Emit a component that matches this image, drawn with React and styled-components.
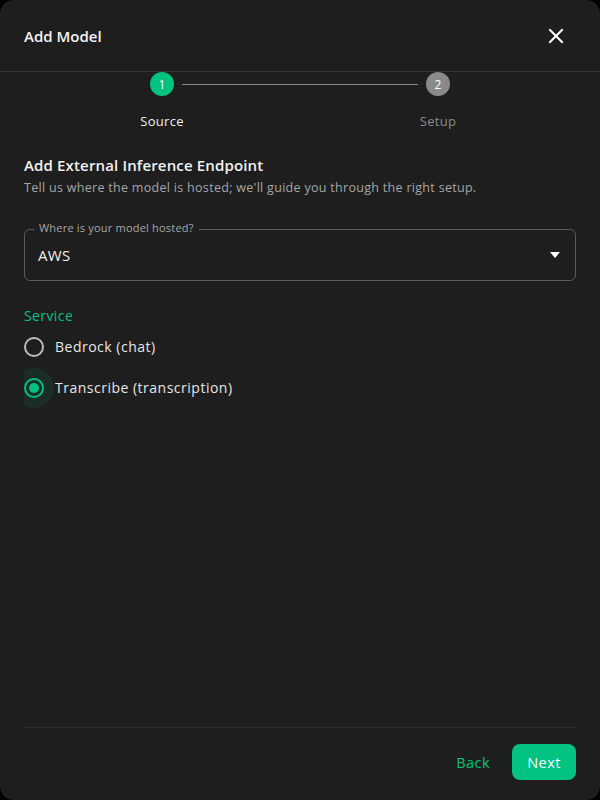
import React from "react";
import styled, { createGlobalStyle } from "styled-components";

const GREEN = "#00c281";

const Global = createGlobalStyle`
  html, body { margin: 0; padding: 0; background: #000; }
  body { font-family: "Open Sans", "Noto Sans", sans-serif; }
  * { box-sizing: border-box; }
`;

const Dialog = styled.div`
  width: 600px;
  height: 800px;
  background: #1e1e1e;
  border-radius: 14px;
  display: flex;
  flex-direction: column;
  color: #ececec;
  overflow: hidden;
`;

const Header = styled.div`
  height: 72px;
  padding: 0 24px;
  display: flex;
  align-items: center;
  justify-content: space-between;
  border-bottom: 1px solid #333;
  flex-shrink: 0;
`;

const Title = styled.h2`
  margin: 0;
  font-size: 15px;
  font-weight: 600;
  color: #f2f2f2;
`;

const CloseBtn = styled.button`
  background: none;
  border: 0;
  padding: 0;
  width: 24px;
  height: 24px;
  display: flex;
  align-items: center;
  justify-content: center;
  color: #fff;
  cursor: pointer;
  margin-right: 8px;
`;

const Body = styled.div`
  flex: 1;
  padding: 0 24px;
  display: flex;
  flex-direction: column;
  overflow: hidden;
`;

const Stepper = styled.div`
  display: grid;
  grid-template-columns: 1fr 1fr;
`;

const Step = styled.div`
  position: relative;
  display: flex;
  flex-direction: column;
  align-items: center;
`;

const Circle = styled.div`
  width: 24px;
  height: 24px;
  border-radius: 50%;
  background: ${(p) => (p.$active ? GREEN : "#8a8a8a")};
  color: #fff;
  font-size: 12px;
  display: flex;
  align-items: center;
  justify-content: center;
  position: relative;
  z-index: 1;
`;

const Connector = styled.div`
  position: absolute;
  top: 12px;
  left: calc(-50% + 20px);
  right: calc(50% + 20px);
  border-top: 1px solid #8a8a8a;
`;

const StepLabel = styled.div`
  margin-top: 16px;
  font-size: 13px;
  line-height: 18px;
  letter-spacing: 0.3px;
  color: ${(p) => (p.$active ? "#f0f0f0" : "#8c8c8c")};
`;

const Section = styled.div`
  margin-top: 25px;
`;

const SectionTitle = styled.h3`
  margin: 0;
  font-size: 15px;
  font-weight: 600;
  line-height: 20px;
  letter-spacing: 0.15px;
  color: #f2f2f2;
`;

const SectionText = styled.p`
  margin: 4px 0 0;
  font-size: 12.5px;
  line-height: 18px;
  letter-spacing: 0.3px;
  color: #a6a6a6;
`;

const SelectBox = styled.div`
  position: relative;
  margin-top: 32px;
  height: 52px;
  border: 1px solid #5a5a5a;
  border-radius: 6px;
  display: flex;
  align-items: center;
  justify-content: space-between;
  padding: 0 14px 0 13px;
`;

const SelectLabel = styled.span`
  position: absolute;
  top: -9px;
  left: 9px;
  padding: 0 5px;
  background: #1e1e1e;
  font-size: 11px;
  line-height: 14px;
  letter-spacing: 0.2px;
  color: #a6a6a6;
`;

const SelectValue = styled.span`
  font-size: 15px;
  letter-spacing: 0.3px;
  color: #f0f0f0;
`;

const ServiceLabel = styled.div`
  margin-top: 25px;
  font-size: 14px;
  line-height: 20px;
  letter-spacing: 0.4px;
  color: ${GREEN};
`;

const RadioGroup = styled.div`
  display: flex;
  flex-direction: column;
  margin-top: 0;
  overflow: hidden;
`;

const RadioRow = styled.label`
  display: flex;
  align-items: center;
  gap: 11px;
  height: 41px;
  font-size: 14px;
  letter-spacing: 0.5px;
  color: #e6e6e6;
  cursor: pointer;
`;

const RadioWrap = styled.span`
  position: relative;
  width: 20px;
  height: 20px;
  flex-shrink: 0;
`;

const Halo = styled.span`
  position: absolute;
  left: -10px;
  top: -10px;
  width: 40px;
  height: 40px;
  border-radius: 50%;
  background: rgba(0, 194, 129, 0.1);
`;

const RadioCircle = styled.span`
  position: absolute;
  inset: 0;
  border-radius: 50%;
  border: 2px solid ${(p) => (p.$checked ? GREEN : "#bdbdbd")};
  display: flex;
  align-items: center;
  justify-content: center;
  &::after {
    content: "";
    display: ${(p) => (p.$checked ? "block" : "none")};
    width: 10px;
    height: 10px;
    border-radius: 50%;
    background: ${GREEN};
  }
`;

const Footer = styled.div`
  margin: 0 24px;
  border-top: 1px solid #2c2c2c;
  padding: 16px 0 20px;
  display: flex;
  justify-content: flex-end;
  align-items: center;
  gap: 14px;
  flex-shrink: 0;
`;

const Button = styled.button`
  height: 36px;
  border: 0;
  border-radius: 8px;
  font-family: inherit;
  font-size: 14.5px;
  letter-spacing: 0.5px;
  padding: 0 ${(p) => (p.$primary ? "15px" : "8px")};
  background: ${(p) => (p.$primary ? GREEN : "transparent")};
  color: ${(p) => (p.$primary ? "#fff" : GREEN)};
  cursor: pointer;
`;

function Radio({ checked, label }) {
  return (
    <RadioRow>
      <RadioWrap>
        {checked && <Halo />}
        <RadioCircle $checked={checked} />
      </RadioWrap>
      {label}
    </RadioRow>
  );
}

export default function App() {
  return (
    <>
      <Global />
      <Dialog>
        <Header>
          <Title>Add Model</Title>
          <CloseBtn aria-label="close">
            <svg width="16" height="16" viewBox="0 0 16 16">
              <path d="M2 2 L14 14 M14 2 L2 14" stroke="currentColor" strokeWidth="2" strokeLinecap="square" />
            </svg>
          </CloseBtn>
        </Header>
        <Body>
          <Stepper>
            <Step>
              <Circle $active>1</Circle>
              <StepLabel $active>Source</StepLabel>
            </Step>
            <Step>
              <Connector />
              <Circle>2</Circle>
              <StepLabel>Setup</StepLabel>
            </Step>
          </Stepper>
          <Section>
            <SectionTitle>Add External Inference Endpoint</SectionTitle>
            <SectionText>Tell us where the model is hosted; we'll guide you through the right setup.</SectionText>
          </Section>
          <SelectBox>
            <SelectLabel>Where is your model hosted?</SelectLabel>
            <SelectValue>AWS</SelectValue>
            <svg width="12" height="8" viewBox="0 0 12 8">
              <path d="M1 1 L11 1 L6 7 Z" fill="#fff" />
            </svg>
          </SelectBox>
          <ServiceLabel>Service</ServiceLabel>
          <RadioGroup>
            <Radio label="Bedrock (chat)" />
            <Radio checked label="Transcribe (transcription)" />
          </RadioGroup>
        </Body>
        <Footer>
          <Button>Back</Button>
          <Button $primary>Next</Button>
        </Footer>
      </Dialog>
    </>
  );
}
